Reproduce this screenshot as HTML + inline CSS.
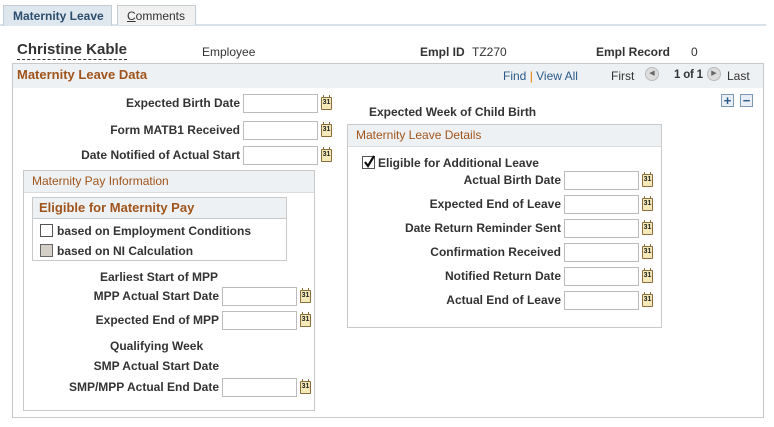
<!DOCTYPE html>
<html><head><style>
*{margin:0;padding:0;box-sizing:border-box}
body{width:774px;height:427px;background:#fff;font-family:"Liberation Sans",Arial,sans-serif;font-size:12px;color:#333;position:relative;overflow:hidden}
.a{position:absolute;white-space:nowrap}
.b{font-weight:bold}
.lbl{position:absolute;font-weight:bold;text-align:right;white-space:nowrap;line-height:14px}
.in{position:absolute;width:75px;height:19px;border:1px solid #bbb;background:#fff}
.cal{position:absolute;width:11px;height:13px;border:1px solid #8a6d3b;background:#f6e9b8;border-radius:1px;font-size:7px;font-weight:bold;line-height:10px;text-align:center;color:#222}
.cal:before{content:"";position:absolute;left:1px;right:1px;top:-3px;height:2px;border-left:1px solid #8a6d3b;border-right:1px solid #8a6d3b}
.box{position:absolute;border:1px solid #c9c9c9}
.hd{position:absolute;left:0;right:0;top:0;background:#eef1f3;border-bottom:1px solid #dcdcdc;color:#a0541b;padding-left:8px}
.cb{position:absolute;width:13px;height:13px;border:1px solid #555;background:#fff}
</style></head><body>
<div class="a" style="left:0;top:24px;width:766px;height:2px;background:#d6e1ea"></div>
<div class="a b" style="left:3px;top:5px;width:109px;height:21px;background:#dfe7ee;border:1px solid #c4ccd3;border-bottom:none;color:#2b4d6e;padding:3px 0 0 9px">Maternity Leave</div>
<div class="a" style="left:117px;top:5px;width:79px;height:20px;background:#f1f1f1;border:1px solid #c4ccd3;border-bottom:none;color:#333;padding:3px 0 0 9px"><u>C</u>omments</div>
<div class="a b" style="left:17px;top:41px;font-size:15px;color:#333;border-bottom:1px dashed #333;line-height:18px">Christine Kable</div>
<div class="a" style="left:202px;top:45px">Employee</div>
<div class="a b" style="left:420px;top:45px">Empl ID</div>
<div class="a" style="left:472px;top:45px">TZ270</div>
<div class="a b" style="left:596px;top:45px">Empl Record</div>
<div class="a" style="left:691px;top:45px">0</div>

<div class="box" style="left:12px;top:63px;width:752px;height:355px">
<div class="hd b" style="height:24px;padding-left:4px;line-height:22px;font-size:13px;border-bottom:none">Maternity Leave Data</div>
</div>
<div class="a" style="left:503px;top:69px;color:#2b5b8a">Find <span style="color:#e07b00">|</span> View All</div>
<div class="a" style="left:611px;top:69px">First</div>
<div class="a" style="left:645px;top:67px;width:14px;height:14px;border-radius:7px;background:#ddd;border:1px solid #bbb;font-size:7px;line-height:12px;text-align:center;color:#666">◀</div>
<div class="a b" style="left:674px;top:69px;font-size:11.5px;letter-spacing:-0.2px">1 of 1</div>
<div class="a" style="left:707px;top:67px;width:14px;height:14px;border-radius:7px;background:#ddd;border:1px solid #bbb;font-size:7px;line-height:12px;text-align:center;color:#666">▶</div>
<div class="a" style="left:727px;top:69px">Last</div>
<div class="a b" style="left:721px;top:94px;width:13px;height:13px;border:1px solid #7a9ab8;background:#e8eef4;color:#2b5b8a;font-size:13px;line-height:11px;text-align:center">+</div>
<div class="a b" style="left:740px;top:94px;width:13px;height:13px;border:1px solid #7a9ab8;background:#e8eef4;color:#2b5b8a;font-size:13px;line-height:11px;text-align:center">−</div>

<div class="lbl" style="right:534px;top:96px">Expected Birth Date</div>
<div class="in" style="left:243px;top:94px"></div><div class="cal" style="left:321px;top:97px">31</div>
<div class="lbl" style="right:534px;top:123px">Form MATB1 Received</div>
<div class="in" style="left:243px;top:121px"></div><div class="cal" style="left:321px;top:124px">31</div>
<div class="lbl" style="right:534px;top:148px">Date Notified of Actual Start</div>
<div class="in" style="left:243px;top:146px"></div><div class="cal" style="left:321px;top:149px">31</div>

<div class="lbl" style="left:369px;top:105px">Expected Week of Child Birth</div>

<div class="box" style="left:347px;top:124px;width:315px;height:204px">
<div class="hd" style="height:22px;line-height:21px">Maternity Leave Details</div>
</div>
<div class="cb" style="left:362px;top:156px"></div>
<svg class="a" style="left:362px;top:154px" width="14" height="15" viewBox="0 0 14 15"><path d="M3 8 L6 12 L12 2" fill="none" stroke="#111" stroke-width="2.2"/></svg>
<div class="lbl" style="left:378px;top:156px">Eligible for Additional Leave</div>
<div class="lbl" style="right:213px;top:173px">Actual Birth Date</div>
<div class="in" style="left:564px;top:171px"></div><div class="cal" style="left:642px;top:174px">31</div>
<div class="lbl" style="right:213px;top:197px">Expected End of Leave</div>
<div class="in" style="left:564px;top:195px"></div><div class="cal" style="left:642px;top:198px">31</div>
<div class="lbl" style="right:213px;top:221px">Date Return Reminder Sent</div>
<div class="in" style="left:564px;top:219px"></div><div class="cal" style="left:642px;top:222px">31</div>
<div class="lbl" style="right:213px;top:245px">Confirmation Received</div>
<div class="in" style="left:564px;top:243px"></div><div class="cal" style="left:642px;top:246px">31</div>
<div class="lbl" style="right:213px;top:269px">Notified Return Date</div>
<div class="in" style="left:564px;top:267px"></div><div class="cal" style="left:642px;top:270px">31</div>
<div class="lbl" style="right:213px;top:293px">Actual End of Leave</div>
<div class="in" style="left:564px;top:291px"></div><div class="cal" style="left:642px;top:294px">31</div>

<div class="box" style="left:23px;top:170px;width:292px;height:241px">
<div class="hd" style="height:22px;line-height:21px">Maternity Pay Information</div>
</div>
<div class="box" style="left:32px;top:197px;width:255px;height:64px">
<div class="hd b" style="height:21px;line-height:20px;font-size:13px;padding-left:6px;border-bottom:1px solid #c9c9c9">Eligible for Maternity Pay</div>
</div>
<div class="cb" style="left:40px;top:224px"></div>
<div class="lbl" style="left:57px;top:224px">based on Employment Conditions</div>
<div class="cb" style="left:40px;top:244px;background:#d4d0c8;border-color:#666"></div>
<div class="lbl" style="left:57px;top:244px">based on NI Calculation</div>

<div class="lbl" style="left:100px;top:270px">Earliest Start of MPP</div>
<div class="lbl" style="right:555px;top:289px">MPP Actual Start Date</div>
<div class="in" style="left:222px;top:287px"></div><div class="cal" style="left:300px;top:290px">31</div>
<div class="lbl" style="right:555px;top:313px">Expected End of MPP</div>
<div class="in" style="left:222px;top:311px"></div><div class="cal" style="left:300px;top:314px">31</div>
<div class="lbl" style="left:110px;top:339px">Qualifying Week</div>
<div class="lbl" style="right:555px;top:359px">SMP Actual Start Date</div>
<div class="lbl" style="right:555px;top:380px">SMP/MPP Actual End Date</div>
<div class="in" style="left:222px;top:378px"></div><div class="cal" style="left:300px;top:381px">31</div>
</body></html>
